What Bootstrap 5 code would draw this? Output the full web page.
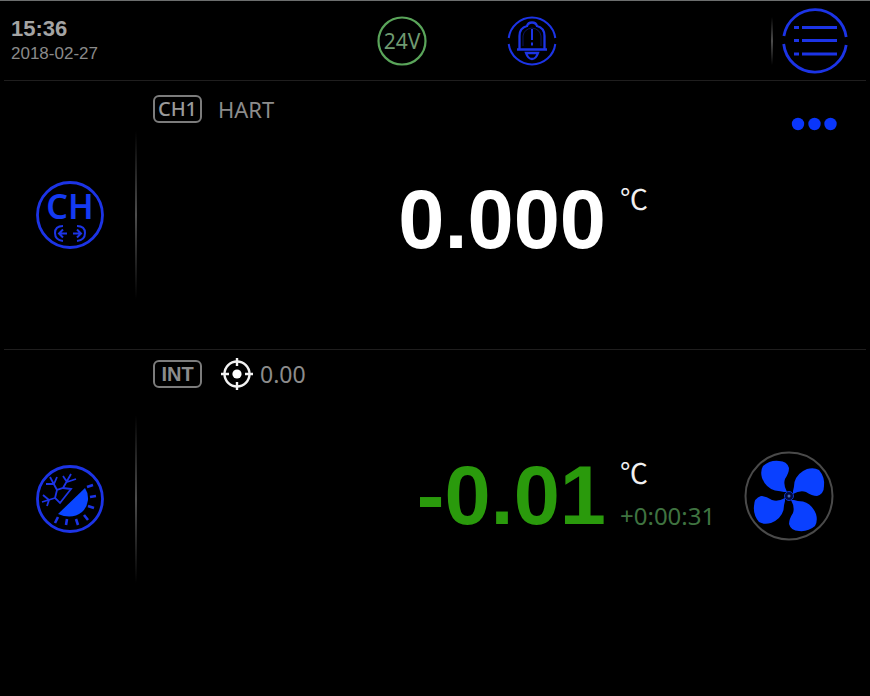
<!DOCTYPE html>
<html lang="en" data-bs-theme="dark">
<head>
<meta charset="utf-8">
<meta name="viewport" content="width=device-width, initial-scale=1">
<title>Calibrator</title>
<link href="https://cdn.jsdelivr.net/npm/bootstrap@5.3.0/dist/css/bootstrap.min.css" rel="stylesheet">
<style>
  :root { --ink: #8c8c8c; --rule: #1f1e1e; }
  body { background: #000; color: var(--ink); font-family: "Noto Sans", "Open Sans", sans-serif; }
  svg { display: block; }
  .screen { border-top: 1px solid #6c6e6e; }
  .topbar { display: grid; grid-template-columns: 374fr 396fr auto; align-items: center; min-height: 80px; border-bottom: 1px solid var(--rule); margin: 0 4px; }
  .clock { font-family: "Liberation Sans", Arial, sans-serif; padding-left: 7px; }
  .clock-time { font-size: 22px; line-height: 26px; font-weight: 700; color: #a4a4a4; }
  .clock-date { font-size: 17px; line-height: 24px; color: #8a8a8a; }
  .status { gap: 80px; }
  .menu-area { padding-right: 18px; }
  .vline { width: 2px; background: linear-gradient(transparent, #4c4c4c 50%, transparent); }
  .topbar .vline { height: 48px; margin-right: 9px; }
  .icon-btn { background: none; border: 0; padding: 0; }
  .channel { display: grid; grid-template-columns: 137px minmax(0, 1fr); min-height: 268px; }
  .rail { display: flex; align-items: center; justify-content: space-between; padding-left: 35px; }
  .rail .vline { height: 168px; }
  .rule { height: 1px; background: var(--rule); margin: 0 4px; }
  .head { height: 28px; margin: 14px 33px 0 16px; }
  .tag { border: 2px solid #7c7c7c; border-radius: 6px; width: 49px; height: 28px; line-height: 24px; font-size: 20px; font-weight: 500; text-align: center; color: #9a9a9a; }
  .tag-bold { font-family: "Liberation Sans", Arial, sans-serif; font-weight: 700; color: #8c8c8c; }
  .label { font-size: 22px; line-height: 28px; }
  .label-target { font-size: 23px; }
  .more { margin-top: 22px; }
  .reading { display: grid; grid-template-columns: minmax(0, 1fr) 250px; column-gap: 14px; margin-top: 55px; }
  .figure-lg { font-family: "Liberation Sans", Arial, sans-serif; font-weight: 700; font-size: 83px; line-height: 84px; text-align: right; color: #fff; }
  .figure-green { color: #2a9a0c; }
  .unit { font-family: "Noto Sans CJK SC", sans-serif; font-size: 28px; line-height: 40px; color: #f0f0f0; }
  .elapsed { font-size: 24px; line-height: 48px; color: #3f7340; }
  .channel-int { min-height: 298px; }
  .channel-int .head { margin-top: 10px; }
  .channel-int .reading { margin-top: 63px; align-items: center; }
  .fan { margin-right: 36px; }
</style>
<script src="https://cdn.jsdelivr.net/npm/bootstrap@5.3.0/dist/js/bootstrap.bundle.min.js"></script>
</head>
<body>
<div class="screen d-flex flex-column min-vh-100">
  <header class="topbar">
    <div class="clock">
      <div class="clock-time">15:36</div>
      <div class="clock-date">2018-02-27</div>
    </div>
    <div class="status d-flex align-items-center">
      <svg width="50" height="50" viewBox="-25 -25 50 50" role="img" aria-label="24 volt supply">
        <circle r="23.5" fill="none" stroke="#5aa55a" stroke-width="2.2"/>
        <text y="8" text-anchor="middle" font-family="Noto Sans" font-size="21" fill="#6f9a70">24V</text>
      </svg>
      <button class="icon-btn" type="button" aria-label="Alarm">
        <svg width="50" height="50" viewBox="-25 -25 50 50" fill="none" stroke="#1c34e6" stroke-width="2">
          <path d="M-23.300-3A23.500 23.500 0 0 1 23.300-3M-23.300 3A23.500 23.500 0 0 0 23.300 3"/>
          <path d="M-15 8.500H15M-12.500 8V-5C-12.500-11-9-14-5-15Q-4-18.500 0-18.500T5-15C9-14 12.500-11 12.500-5V8M-6 12H6Q4 18 0 18T-6 12Z" stroke-width="2.300"/>
          <path d="M-9 5V-5Q-8-12 0-13Q8-12 9-5V5" stroke-width="1" opacity=".4"/>
          <path d="M0-12V-1M0 1.500V4.500"/>
        </svg>
      </button>
    </div>
    <div class="menu-area d-flex align-items-center">
      <div class="vline"></div>
      <button class="icon-btn" type="button" aria-label="Menu">
        <svg width="66" height="66" viewBox="-33 -33 66 66" fill="none" stroke="#1c34e6" stroke-width="2.800">
          <path d="M-31.100-5A31.500 31.500 0 0 1 31.200-4M-31.300 3A31.500 31.500 0 0 0 31.200 4"/>
          <path d="M-13-13.500H22M-13-.500H22M-13 13H22" stroke-width="3.200"/>
          <path d="M-21-13.500H-16M-21-.500H-16M-21 13H-16" stroke-width="3.200"/>
        </svg>
      </button>
    </div>
  </header>

  <main>
    <section class="channel" aria-label="Channel 1">
      <div class="rail">
        <button class="icon-btn" type="button" aria-label="Select channel">
          <svg width="70" height="70" viewBox="-35 -35 70 70" fill="none" stroke="#1c34e6" stroke-width="2.800">
            <circle r="32.500"/>
            <text y="4" text-anchor="middle" font-family="Noto Sans" font-size="34" font-weight="600" fill="#143af2" stroke="none">CH</text>
            <path d="M-7 11Q-15 11-15 18T-7 26M7 11Q15 11 15 18T7 26M-3 18.500H-10M-7 14.500L-11 18.500L-7 22.500M3 18.500H10M7 14.500L11 18.500L7 22.500" stroke-width="2"/>
          </svg>
        </button>
        <div class="vline"></div>
      </div>
      <div>
        <div class="head d-flex">
          <span class="tag">CH1</span>
          <span class="label ms-3">HART</span>
          <button class="more icon-btn ms-auto" type="button" aria-label="More">
            <svg width="46" height="14" viewBox="0 0 46 14" fill="#0a36fa"><circle cx="7" cy="7" r="6.200"/><circle cx="23.500" cy="7" r="6.200"/><circle cx="39.500" cy="7" r="6.200"/></svg>
          </button>
        </div>
        <div class="reading">
          <div class="figure-lg">0.000</div>
          <div class="unit">℃</div>
        </div>
      </div>
    </section>
    <div class="rule"></div>
    <section class="channel channel-int" aria-label="Internal">
      <div class="rail">
        <button class="icon-btn" type="button" aria-label="Temperature">
          <svg width="70" height="70" viewBox="-35 -35 70 70" fill="none" stroke="#1c34e6" stroke-width="2.800">
            <circle r="32.500"/>
            <path d="M-12 15L15-11A17 18 0 0 1 12 13Q2 21-12 15Z" fill="#0a46ff" stroke="none"/>
            <path d="M-12 18L-15 24M-3 20L-4 26M6 20L8 26M14 16L18 21M18 7L24 9M20-2L26-3M17-12L23-14" stroke-width="2.600"/>
            <path d="M1-10L-7-11L-13-9L-15-1L-10 4ZM-13-9L-20-22M-16-15L-24-15M-16-15L-13-22M-7-11L1-25M-3-17L-7-23M-3-17L6-20M-15-1L-28 3M-21 1L-27-4M-21 1L-23 7" stroke-width="1.800"/>
          </svg>
        </button>
        <div class="vline"></div>
      </div>
      <div>
        <div class="head d-flex align-items-center">
          <span class="tag tag-bold">INT</span>
          <svg class="ms-3" width="38" height="34" viewBox="-19 -17 38 34" fill="none" stroke="#f2f2f2" stroke-width="2.400">
            <circle r="12.500"/><circle r="4.600" fill="#fff" stroke="none"/>
            <path d="M-16 0H-8M8 0H16M0-16V-8M0 8V16"/>
          </svg>
          <span class="label label-target ms-1">0.00</span>
        </div>
        <div class="reading">
          <div class="figure-lg figure-green">-0.01</div>
          <div class="d-flex align-items-center">
            <div>
              <div class="unit">℃</div>
              <div class="elapsed">+0:00:31</div>
            </div>
            <button class="fan icon-btn ms-auto" type="button" aria-label="Fan">
              <svg width="90" height="90" viewBox="-45 -45 90 90">
                <defs><path id="blade" d="M-2-4Q-6-11-4-17Q0-23 0-28Q-2-35-10-35Q-19-36-26-30Q-29-25-27-18Q-23-8-14-5.500Q-8-5-5-4Z"/></defs>
                <circle r="43.500" fill="none" stroke="#4a4a4a" stroke-width="2"/>
                <g fill="#0a40ff"><use href="#blade"/><use href="#blade" transform="rotate(90)"/><use href="#blade" transform="rotate(180)"/><use href="#blade" transform="rotate(270)"/></g>
                <circle r="4.500" fill="#020a40" stroke="#0a36d0"/><circle r="1.500" fill="#4a6ab0"/>
              </svg>
            </button>
          </div>
        </div>
      </div>
    </section>
  </main>
</div>
</body>
</html>
